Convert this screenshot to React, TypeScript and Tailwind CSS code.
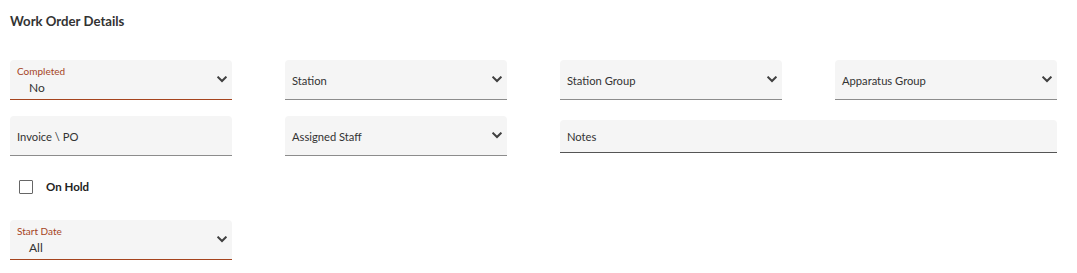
import React from 'react';

type FieldProps = {
  label: string;
  value?: string;
  select?: boolean;
  active?: boolean;
  className?: string;
};

const Chevron = () => (
  <svg width="10" height="7" viewBox="0 0 10 7" className="mt-[-1px] shrink-0">
    <path d="M1.3 1.4 L5 5 L8.7 1.4" fill="none" stroke="#404040" strokeWidth="2.1" strokeLinecap="square" />
  </svg>
);

const Field: React.FC<FieldProps> = ({ label, value, select, active, className }) => {
  const border = active ? 'border-[#a5441e]' : 'border-[#8c8c8c]';
  return (
    <div
      className={`flex h-[40px] items-center rounded-t-[4px] border-b ${border} bg-[#f5f5f5] pl-[7px] pr-[5px] ${className ?? ''}`}>
      {value !== undefined ? (
        <div className="flex flex-1 flex-col pt-[1px]">
          <span className="text-[10px] leading-[13px] text-[#a5441e]">{label}</span>
          <span className="mt-[2px] pl-[12px] text-[12px] leading-[15px] text-[#333]">{value}</span>
        </div>
      ) : (
        <span className="flex-1 pt-[4px] text-[11.2px] text-[#333]">{label}</span>
      )}
      {select && <Chevron />}
    </div>
  );
};

const App: React.FC = () => {
  return (
    <div className="h-[273px] w-[1077px] bg-white font-['Lato','Noto_Sans',sans-serif]">
      <div className="px-[10px] pt-[13px]">
        <h2 className="text-[13.2px] font-bold leading-[16px] text-[#333]">Work Order Details</h2>
        <div className="mt-[31px] grid w-[1047px] grid-cols-4 gap-x-[53px] gap-y-[16px]">
          <Field label="Completed" value="No" select active />
          <Field label="Station" select />
          <Field label="Station Group" select />
          <Field label="Apparatus Group" select />
          <Field label="Invoice \ PO" />
          <Field label="Assigned Staff" select />
          <div className="col-span-2 flex items-center">
            <div className="flex h-[33px] w-full items-center rounded-t-[4px] border-b border-[#555] bg-[#f5f5f5] pl-[7px]">
              <span className="pt-[3px] text-[11.2px] text-[#333]">Notes</span>
            </div>
          </div>
        </div>
        <label className="mt-[22px] flex items-center pl-[9px]">
          <span className="h-[14px] w-[14px] rounded-[1px] border border-[#666] bg-white" />
          <span className="ml-[13px] text-[11.5px] font-bold text-[#222]">On Hold</span>
        </label>
        <div className="mt-[25px] w-[222px]">
          <Field label="Start Date" value="All" select active />
        </div>
      </div>
    </div>
  );
};

export default App;
